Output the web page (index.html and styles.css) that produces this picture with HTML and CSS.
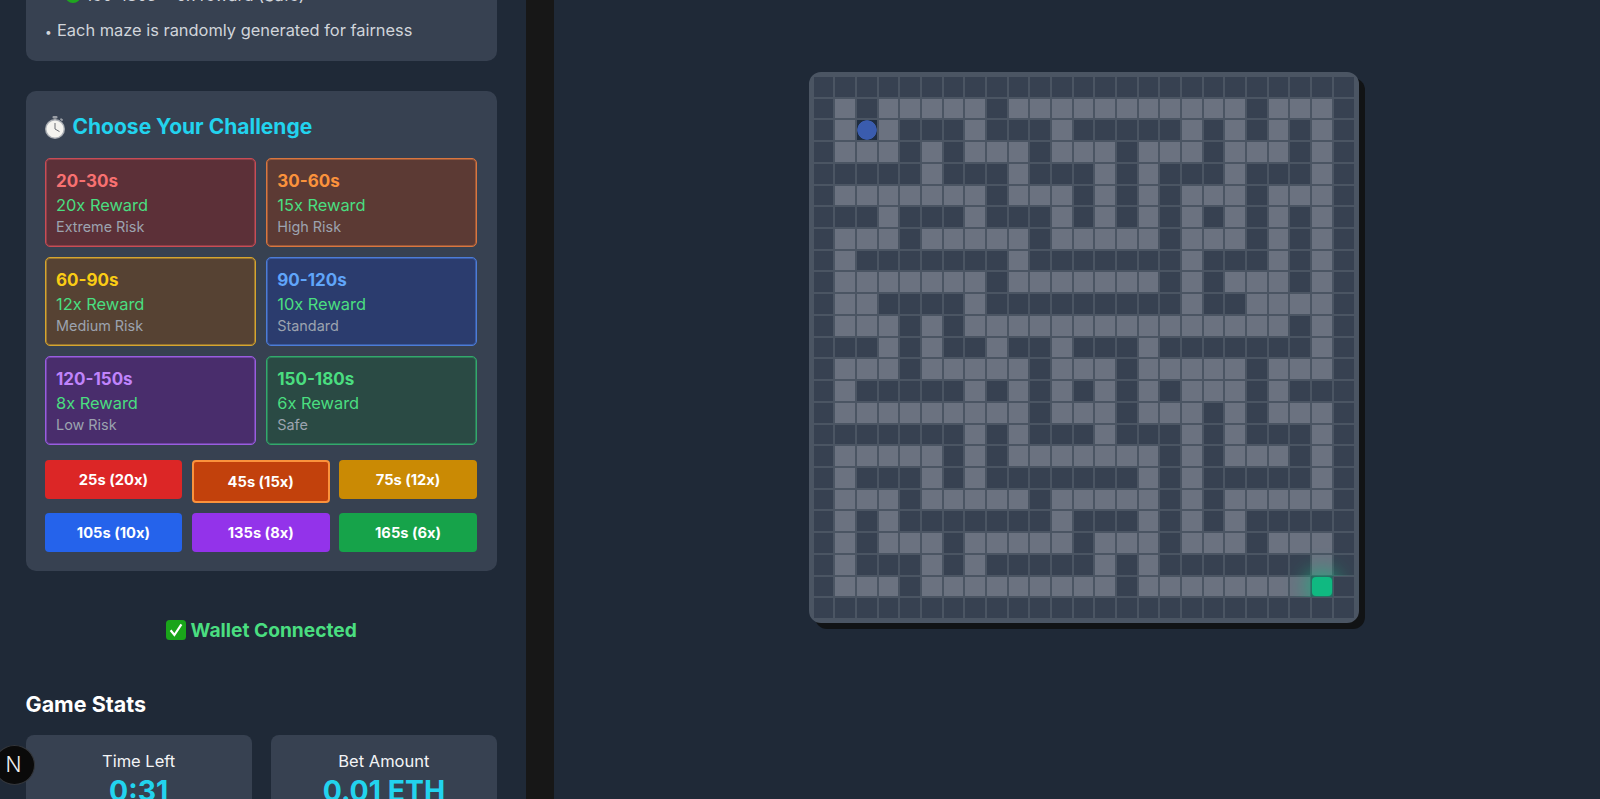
FILE: index.html
```html
<!DOCTYPE html>
<html lang="en">
<head>
  <meta charset="UTF-8">
  <title>Maze Runner</title>
  <link rel="stylesheet" href="styles.css">
</head>
<body>
  <div class="layout">
    <aside class="sidebar">
      <div class="sidebar-inner">
        <section class="panel rules">
          <p class="rule-line rule-sub">
            <svg class="dot" viewBox="0 0 16 16"><circle cx="8" cy="8" r="8" fill="#1fa61f"/></svg>
            150-180s = 6x reward (Safe)
          </p>
          <p class="rule-line"><span class="bullet">•</span>Each maze is randomly generated for fairness</p>
        </section>

        <section class="panel challenge">
          <h2 class="challenge-title">
            <svg class="stopwatch" viewBox="0 0 20 23">
              <rect x="7.5" y="0" width="5" height="2.6" rx="1" fill="#9a9ea5"/>
              <rect x="9" y="2" width="2" height="2.5" fill="#7f838a"/>
              <rect x="15" y="2.6" width="3" height="2" rx="0.8" transform="rotate(42 16.5 3.6)" fill="#9a9ea5"/>
              <circle cx="10" cy="13" r="10" fill="#a9adb3"/>
              <circle cx="10" cy="13" r="8.6" fill="#f4f3ef"/>
              <path d="M10 13 L10 7 M10 13 L14.5 15.6" stroke="#6a6d73" stroke-width="1" fill="none"/>
            </svg>
            Choose Your Challenge
          </h2>

          <div class="tier-grid">
            <div class="tier tier-red">
              <div class="tier-time">20-30s</div>
              <div class="tier-reward">20x Reward</div>
              <div class="tier-risk">Extreme Risk</div>
            </div>
            <div class="tier tier-orange">
              <div class="tier-time">30-60s</div>
              <div class="tier-reward">15x Reward</div>
              <div class="tier-risk">High Risk</div>
            </div>
            <div class="tier tier-yellow">
              <div class="tier-time">60-90s</div>
              <div class="tier-reward">12x Reward</div>
              <div class="tier-risk">Medium Risk</div>
            </div>
            <div class="tier tier-blue">
              <div class="tier-time">90-120s</div>
              <div class="tier-reward">10x Reward</div>
              <div class="tier-risk">Standard</div>
            </div>
            <div class="tier tier-purple">
              <div class="tier-time">120-150s</div>
              <div class="tier-reward">8x Reward</div>
              <div class="tier-risk">Low Risk</div>
            </div>
            <div class="tier tier-green">
              <div class="tier-time">150-180s</div>
              <div class="tier-reward">6x Reward</div>
              <div class="tier-risk">Safe</div>
            </div>
          </div>

          <div class="time-buttons">
            <button class="time-btn btn-red">25s (20x)</button>
            <button class="time-btn btn-orange selected">45s (15x)</button>
            <button class="time-btn btn-yellow">75s (12x)</button>
            <button class="time-btn btn-blue">105s (10x)</button>
            <button class="time-btn btn-purple">135s (8x)</button>
            <button class="time-btn btn-green">165s (6x)</button>
          </div>
        </section>

        <div class="wallet-status">
          <svg class="check" viewBox="0 0 20 20">
            <rect width="20" height="20" rx="3.5" fill="#1aa51a"/>
            <path d="M4.6 10.2 L8.4 15 L15.4 4.4" stroke="#fff" stroke-width="2.2" fill="none"/>
          </svg>
          Wallet Connected
        </div>

        <h3 class="stats-title">Game Stats</h3>
        <div class="stats-grid">
          <div class="stat">
            <div class="stat-label">Time Left</div>
            <div class="stat-value">0:31</div>
          </div>
          <div class="stat">
            <div class="stat-label">Bet Amount</div>
            <div class="stat-value">0.01 ETH</div>
          </div>
        </div>
      </div>
      <div class="dev-badge">N</div>
    </aside>

    <div class="gutter"></div>

    <main class="game-area">
      <div class="maze" id="maze"></div>
    </main>
  </div>

  <script>
    const rows = [
      '.........................',
      '.#.#####.###########.###.',
      '.#P#...#...#.....#.#.#.#.',
      '.###.#.###.###.###.###.#.',
      '.....#...#...#.#...#...#.',
      '.#######.###.#.#.###.###.',
      '...#...#...#.#.#.#.#.#.#.',
      '.###.#####.#####.###.#.#.',
      '.#.......#.......#...#.#.',
      '.#######.#######.#.###.#.',
      '.##....#.........#..####.',
      '.###.#.###############.#.',
      '...#.#..#..#...#.......#.',
      '.###.#####.###.#####.###.',
      '.#.....#.#.#.#.#.###.#...',
      '.#########.###.###.#.###.',
      '.......#.#...#...#.#...#.',
      '.#####.#.#######.#.###.#.',
      '.#...#.#.......#.#.....#.',
      '.###.#####.#####.#.#####.',
      '.#.#.......#...#.#.#.....',
      '.#.###.#####.###.###.###.',
      '.#...#.#.....#.#.......#.',
      '.###.#########.########G.',
      '.........................'
    ];

    const kinds = { '.': 'wall', '#': 'path', 'P': 'player', 'G': 'goal' };

    document.getElementById('maze').innerHTML = rows.map(r =>
      r.split('').map(c => `<div class="cell ${kinds[c]}"></div>`).join('')
    ).join('');
  </script>
</body>
</html>
```

FILE: styles.css
```css
* {
  box-sizing: border-box;
}
html, body {
  margin: 0;
  height: 100%;
  overflow: hidden;
}
body {
  font-family: Inter, 'Noto Sans', sans-serif;
  background: #1f2937;
  color: #fff;
}
.layout {
  display: flex;
  height: 799px;
}

/* sidebar, scrolled down a bit */
.sidebar {
  position: relative;
  width: 526px;
  height: 100%;
  overflow: hidden;
  background: #1f2937;
  flex-shrink: 0;
}
.sidebar-inner {
  margin-top: -60px;
  padding: 0 29px 0 25.5px;
}
.gutter {
  width: 28px;
  background: #171717;
  flex-shrink: 0;
}
.panel {
  background: #374151;
  border-radius: 10px;
}
.rules {
  height: 121px;
  padding: 43px 19.5px 0;
  margin-bottom: 30px;
}
.rule-line {
  margin: 0 0 11px;
  font-size: 16.4px;
  line-height: 24px;
  color: #d1d5db;
}
.rule-sub {
  padding-left: 20px;
}
.bullet {
  display: inline-block;
  width: 12px;
  font-size: 12px;
}
.dot {
  width: 16px;
  height: 16px;
  vertical-align: -2px;
}

.challenge {
  padding: 21px 20px 19px 19px;
}
.challenge-title {
  display: flex;
  align-items: center;
  gap: 8px;
  margin: 0 0 16px;
  font-size: 21px;
  line-height: 30px;
  font-weight: 700;
  color: #22d3ee;
}
.stopwatch {
  width: 20px;
  height: 23px;
}

.tier-grid {
  display: grid;
  grid-template-columns: 1fr 1fr;
  gap: 10px;
}
.tier {
  padding: 10.5px 10.5px 9.5px;
  border: 1px solid;
  border-radius: 5px;
  box-shadow: inset 0 0 0 1px var(--soft);
}
.tier-time {
  font-size: 17px;
  line-height: 23px;
  font-weight: 700;
}
.tier-reward {
  font-size: 16.4px;
  line-height: 24px;
  color: #4ade80;
}
.tier-risk {
  font-size: 14.4px;
  line-height: 20px;
  color: #9ca3af;
}
.tier-red { background: #5c3038; border-color: #c94c55; --soft: #8e3f48; }
.tier-red .tier-time { color: #f87171; }
.tier-orange { background: #5c3a34; border-color: #d9763f; --soft: #9a583a; }
.tier-orange .tier-time { color: #fb923c; }
.tier-yellow { background: #564233; border-color: #d6a52e; --soft: #957432; }
.tier-yellow .tier-time { color: #facc15; }
.tier-blue { background: #2b3c6e; border-color: #4c7cd8; --soft: #3b5ca3; }
.tier-blue .tier-time { color: #60a5fa; }
.tier-purple { background: #492d6c; border-color: #9a5de0; --soft: #7145a6; }
.tier-purple .tier-time { color: #c084fc; }
.tier-green { background: #2a4a44; border-color: #32a96c; --soft: #2e7a58; }
.tier-green .tier-time { color: #4ade80; }

.time-buttons {
  display: grid;
  grid-template-columns: repeat(3, 1fr);
  gap: 10px 9.5px;
  margin-top: 15px;
}
.time-btn {
  height: 39px;
  border: none;
  border-radius: 4px;
  font-family: inherit;
  font-size: 14.7px;
  font-weight: 700;
  color: #fff;
}
.time-btn.selected {
  height: 43px;
  border: 2px solid #fb923c;
}
.btn-red { background: #dc2626; }
.btn-orange { background: #c2410c; }
.btn-yellow { background: #ca8a04; }
.btn-blue { background: #2563eb; }
.btn-purple { background: #9333ea; }
.btn-green { background: #16a34a; }

.wallet-status {
  display: flex;
  justify-content: center;
  align-items: center;
  gap: 5px;
  margin-top: 44px;
  font-size: 19.2px;
  line-height: 30px;
  font-weight: 700;
  color: #4ade80;
}
.check {
  width: 20px;
  height: 20px;
}
.stats-title {
  margin: 44px 0 16px;
  font-size: 21.5px;
  line-height: 30px;
  font-weight: 700;
  color: #fff;
}
.stats-grid {
  display: grid;
  grid-template-columns: 1fr 1fr;
  gap: 19px;
}
.stat {
  height: 100px;
  padding: 14px 10px;
  background: #374151;
  border-radius: 8px;
  text-align: center;
}
.stat-label {
  font-size: 16.5px;
  line-height: 24px;
  color: #f3f4f6;
}
.stat-value {
  font-size: 28.4px;
  line-height: 36px;
  font-weight: 700;
  color: #22d3ee;
}
.dev-badge {
  position: absolute;
  left: -6px;
  top: 745px;
  width: 41px;
  height: 40px;
  padding-right: 2px;
  border-radius: 50%;
  border: 1px solid #33363b;
  background: #0a0a0a;
  color: #eee;
  font-size: 21px;
  font-weight: 300;
  line-height: 38px;
  text-align: center;
}

/* maze board */
.game-area {
  flex: 1;
  display: flex;
  justify-content: center;
  align-items: flex-start;
  padding: 72px 0 0 13px;
  background: #1f2937;
}
.maze {
  display: grid;
  grid-template-columns: repeat(25, 1fr);
  grid-template-rows: repeat(25, 1fr);
  width: 550px;
  height: 551px;
  border: 4px solid #4b5563;
  border-radius: 12px;
  background: #374151;
  box-shadow: 6px 6px 0 #111315;
}
.cell {
  border: 1px solid #4b5563;
}
.wall {
  background: #374151;
}
.path {
  background: #6b7280;
}
.player {
  background: #1f2d40 radial-gradient(circle closest-side, #3a5cae 94%, transparent 100%);
}
.goal {
  background: #10b981;
  border: none;
  margin: 1px;
  border-radius: 4px;
  box-shadow: 0 0 22px 3px #10b981;
}
```
